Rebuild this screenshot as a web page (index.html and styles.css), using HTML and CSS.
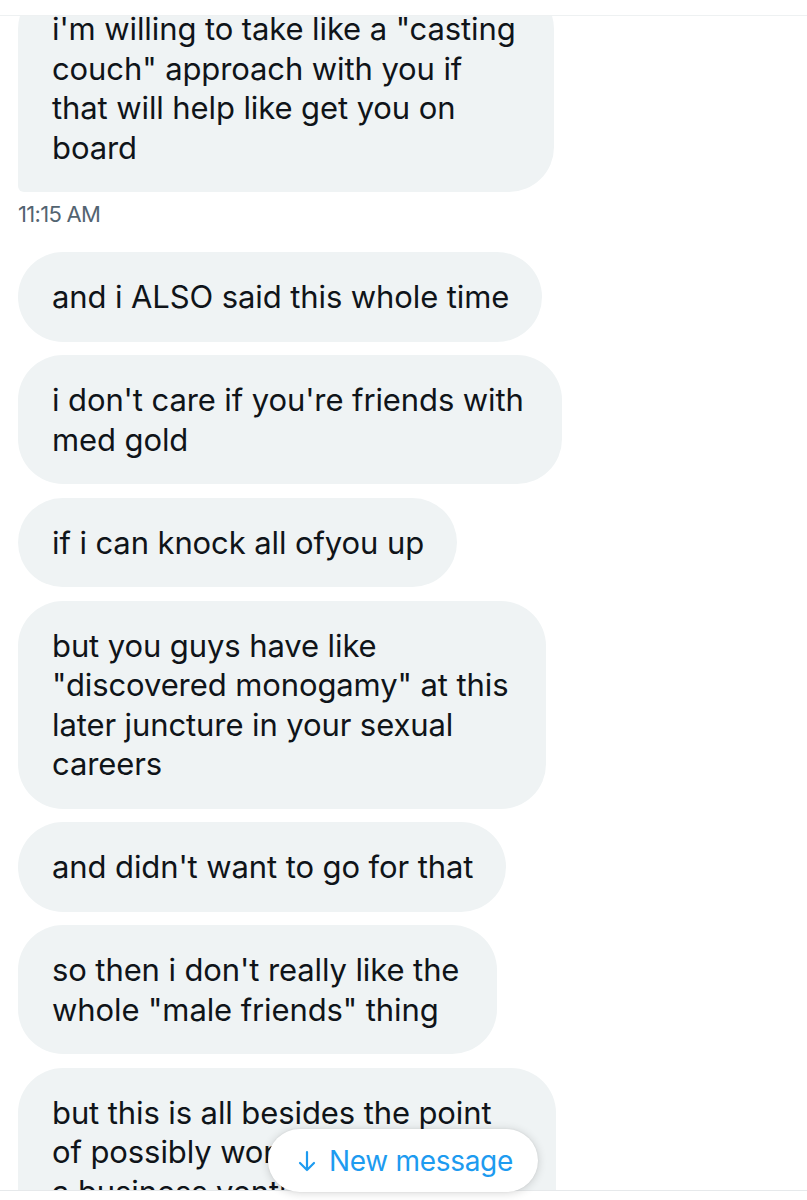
FILE: index.html
```html
<!DOCTYPE html>
<html lang="en">
<head>
  <meta charset="UTF-8">
  <meta name="viewport" content="width=device-width, initial-scale=1.0">
  <title>Messages</title>
  <link rel="stylesheet" href="styles.css">
</head>
<body>
  <div class="screen">
    <div class="topbar"></div>

    <div class="thread">
      <div class="list">
        <div class="bubble multi last">i'm willing to take like a "casting<br>couch" approach with you if<br>that will help like get you on<br>board</div>
        <div class="time">11:15 AM</div>

        <div class="bubble">and i ALSO said this whole time</div>
        <div class="bubble multi">i don't care if you're friends with<br>med gold</div>
        <div class="bubble">if i can knock all ofyou up</div>
        <div class="bubble multi">but you guys have like<br>"discovered monogamy" at this<br>later juncture in your sexual<br>careers</div>
        <div class="bubble">and didn't want to go for that</div>
        <div class="bubble multi">so then i don't really like the<br>whole "male friends" thing</div>
        <div class="bubble multi">but this is all besides the point<br>of possibly working together on<br>a business venture with all of us</div>
      </div>
    </div>

    <div class="composer"></div>

    <button class="new-msg">
      <svg class="arrow" width="20" height="22" viewBox="0 0 20 22">
        <path d="M10 2 V20 M3 13 L10 20 L17 13" fill="none" stroke="#1d9bf0" stroke-width="2.2" stroke-linecap="round" stroke-linejoin="round"/>
      </svg>
      New message
    </button>
  </div>
</body>
</html>
```

FILE: styles.css
```css
body {
  margin: 0;
  background-color: #fff;
  font-family: Inter, "Noto Sans", sans-serif;
  color: #0f1419;
}

.screen {
  position: relative;
  width: 807px;
  height: 1200px;
  overflow: hidden;
  display: flex;
  flex-direction: column;
}

.topbar {
  height: 15px;
  background-color: #fff;
  border-bottom: 1px solid #eef1f2;
  flex-shrink: 0;
}

.thread {
  height: 1174px;
  overflow: hidden;
  flex-shrink: 0;
}

.list {
  margin-top: -32px;
  padding-left: 18px;
  display: flex;
  flex-direction: column;
  align-items: flex-start;
}

.bubble {
  background-color: #eff3f4;
  font-size: 31px;
  line-height: 39.5px;
  letter-spacing: -0.1px;
  padding: 25px 33px 25px 34px;
  border-radius: 45px;
  margin-bottom: 13.5px;
  white-space: nowrap;
}

.bubble.multi {
  padding-right: 38px;
}

.bubble.last {
  border-bottom-left-radius: 6px;
}

.time {
  font-size: 22px;
  line-height: 24px;
  letter-spacing: -0.7px;
  color: #536471;
  margin-top: -4px;
  margin-bottom: 26.5px;
}

.composer {
  flex: 1;
  background-color: #fff;
  border-top: 1px solid #e6e9eb;
}

.new-msg {
  position: absolute;
  left: 268px;
  bottom: 8px;
  width: 270px;
  height: 63px;
  border: none;
  border-radius: 32px;
  background-color: #fff;
  box-shadow: 0 1px 10px rgba(0, 0, 0, 0.16), 0 0 2px rgba(0, 0, 0, 0.08);
  color: #1d9bf0;
  font-family: Inter, "Noto Sans", sans-serif;
  font-size: 28px;
  letter-spacing: -0.3px;
  display: flex;
  align-items: center;
  justify-content: center;
  gap: 12px;
  padding: 0 0 0 4px;
}

.arrow {
  display: block;
}
```
